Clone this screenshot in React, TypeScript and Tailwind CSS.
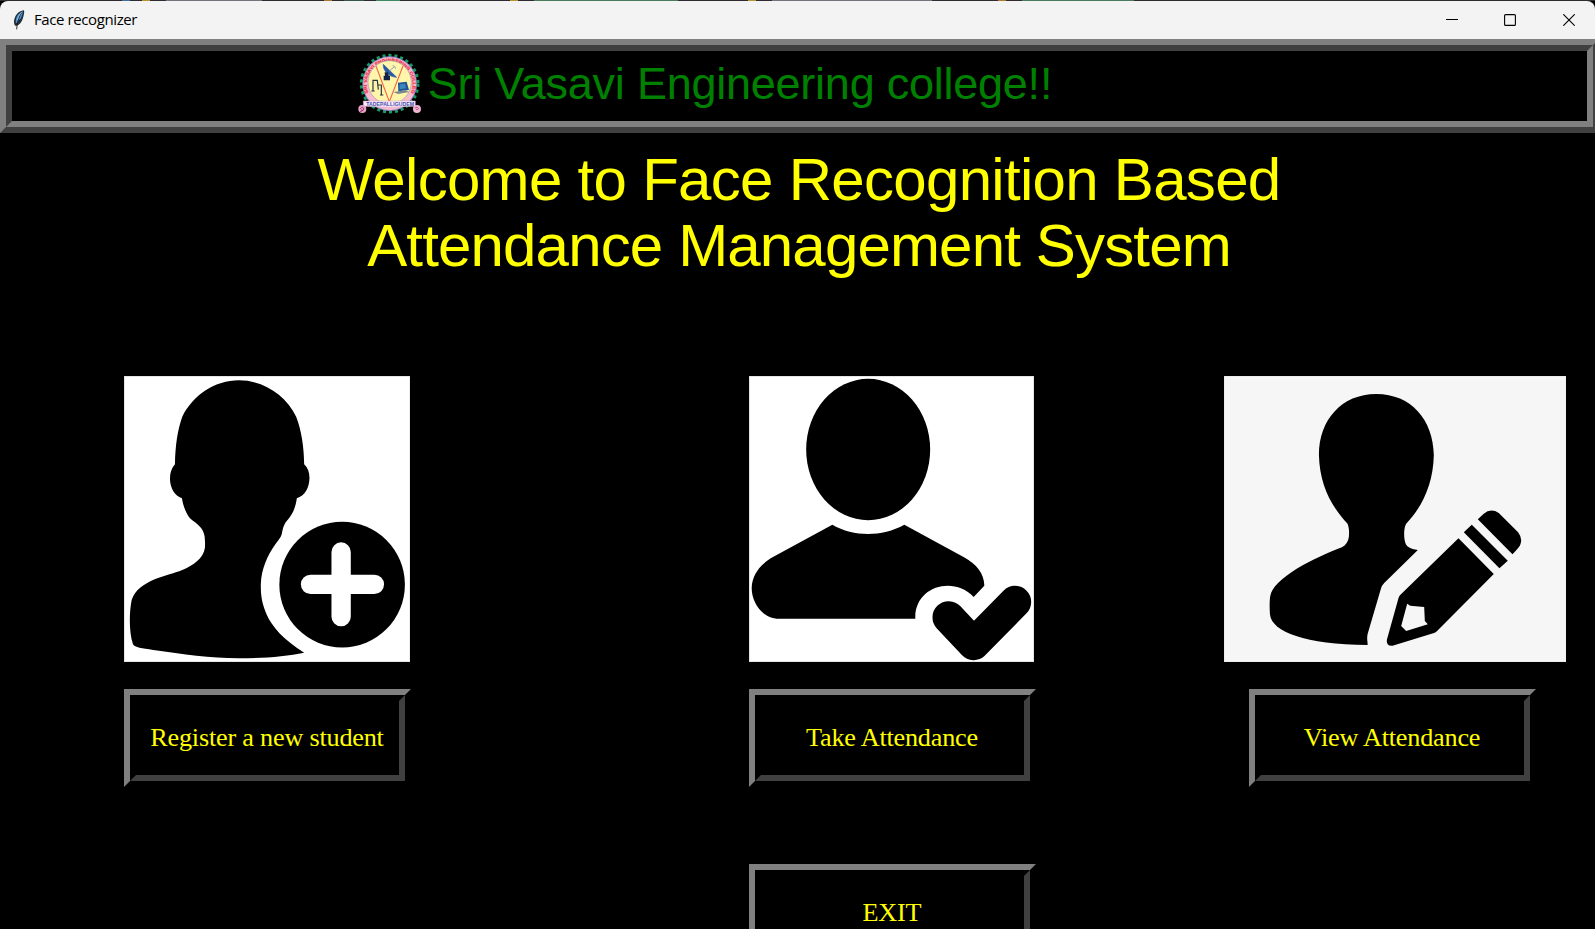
import React from "react";

function Feather() {
  return (
    <svg viewBox="0 0 36 60" className="h-5 w-3 shrink-0">
      <path d="M33 1C22 2 11 10 6 22c-4 9-4 16-1 24l4 2c10-3 18-12 21-24 2-8 5-15 3-23z" fill="#20303c" />
      <path d="M30 4C22 7 13 14 10 24c-2 7-2 12-1 16 8-4 13-10 16-19 2-6 5-11 5-17z" fill="#4f92d2" />
      <path d="M27 7C19 18 13 31 11 58" stroke="#111" strokeWidth="2.6" fill="none" />
      <path d="M26 7c-6 6-11 14-13 23" stroke="#a9cdea" strokeWidth="2.4" fill="none" />
      <path d="M21 28l-4 8" stroke="#111" strokeWidth="3" />
    </svg>
  );
}

function BackdropEdge() {
  return (
    <div className="flex h-px shrink-0 bg-[#2f2b30] pl-[122px]">
      <span className="w-2 bg-[#3f6f9a]" />
      <span className="ml-3 w-2 bg-[#b8962e]" />
      <span className="ml-4 w-24 bg-[#77727c]" />
      <span className="ml-[62px] w-2 bg-[#b07a35]" />
      <span className="ml-3 w-5 bg-[#35564e]" />
      <span className="ml-3 w-6 bg-[#3f8a62]" />
      <span className="ml-[110px] w-2 bg-[#b8962e]" />
      <span className="ml-4 w-36 bg-[#4a7a5c]" />
      <span className="ml-[70px] w-2 bg-[#b8962e]" />
      <span className="ml-4 w-40 bg-[#77727c]" />
      <span className="ml-[66px] w-2 bg-[#b07a35]" />
      <span className="ml-4 w-28 bg-[#4a7a5c]" />
    </div>
  );
}

function TitleBar() {
  return (
    <div className="flex h-[38px] shrink-0 items-center rounded-t-lg bg-[#f3f3f3] pl-[13px] pr-5">
      <Feather />
      <span className="ml-[9px] pb-0.5 font-['Open_Sans','Noto_Sans',sans-serif] text-[15px] leading-5 tracking-[-0.4px] text-black">
        Face recognizer
      </span>
      <div className="ml-auto flex items-center">
        <svg className="h-3 w-3" viewBox="0 0 12 12">
          <path d="M0 5.5H12" stroke="#000" />
        </svg>
        <svg className="ml-[46px] h-3 w-3" viewBox="0 0 12 12">
          <rect x="0.6" y="0.6" width="10.8" height="10.8" rx="1" fill="none" stroke="#000" strokeWidth="1.1" />
        </svg>
        <svg className="ml-[47px] h-3 w-3" viewBox="0 0 12 12">
          <path d="M0.3 0.3L11.7 11.7M11.7 0.3L0.3 11.7" stroke="#000" strokeWidth="1.1" />
        </svg>
      </div>
    </div>
  );
}

function CollegeLogo() {
  return (
    <svg viewBox="52 38 190 184" className="h-[61.3px] w-[63.3px] shrink-0 overflow-visible">
      <defs>
        <path id="arc" d="M83 158A69 69 0 1 1 211 158" />
      </defs>
      <circle cx="147" cy="130" r="85" fill="none" stroke="#149a62" strokeWidth="9" strokeDasharray="9.5 8.5" />
      <circle cx="147" cy="130" r="82" fill="#8d86c9" />
      <circle cx="147" cy="130" r="79" fill="#f9bccd" />
      <text
        fontFamily="Liberation Sans, sans-serif"
        fontSize="13"
        fontWeight="bold"
        fill="#ee3345"
        stroke="#ee3345"
        strokeWidth="0.6"
      >
        <textPath href="#arc" textLength="280" lengthAdjust="spacingAndGlyphs">
          SRI VASAVI ENGINEERING COLLEGE
        </textPath>
      </text>
      <circle cx="147" cy="126" r="65" fill="#fff6ab" stroke="#9aa0a8" strokeWidth="2" />
      <path d="M106 77L146 184L187 77" fill="none" stroke="#f26a4b" strokeWidth="3.5" />
      <path d="M128 72c-2 18 16 38 40 39z" fill="#2859a5" stroke="#2859a5" strokeWidth="2" />
      <path d="M146 92l14-12M156 76q8 0 9 9" stroke="#7d93b5" strokeWidth="2.5" fill="none" />
      <path d="M132 96h10l2 10h4v14h-19v-14h4z" fill="#142040" />
      <path d="M97 152v-32h13l3 28M122 164v-30h-10M92 152h10M118 164h10" fill="none" stroke="#2a3040" strokeWidth="3.5" />
      <path d="M172 127l26-3 7 25-32 4z" fill="#1f5796" />
      <path d="M177 132l16-2 3 14-19 3z" fill="#3b86be" />
      <path d="M158 155l36-5 12 5-34 6z" fill="#7a8791" />
      <path d="M68 182h156v16q-78 5-156 0z" fill="#f5edff" stroke="#d59dc0" strokeWidth="1.5" />
      <text
        x="77"
        y="196"
        textLength="143"
        lengthAdjust="spacingAndGlyphs"
        fontFamily="Liberation Sans, sans-serif"
        fontSize="14"
        fontWeight="bold"
        fill="#4c4ca8"
      >
        TADEPALLIGUDEM
      </text>
      <circle cx="65" cy="206" r="12" fill="#e9a3c9" />
      <path d="M58 206q8-10 12 0q-6 8-9 2M58 214l10-4" fill="none" stroke="#7c2b5c" strokeWidth="2.5" />
      <circle cx="229" cy="206" r="12" fill="#f3b5d3" />
      <path d="M223 203q8-6 11 2q-5 7-8 1" fill="none" stroke="#a54a7e" strokeWidth="2.5" />
    </svg>
  );
}

function Header() {
  return (
    <header className="h-[94px] w-[1599px] shrink-0 border-6 border-b-[#404040] border-l-[#808080] border-r-[#404040] border-t-[#808080]">
      <div className="flex h-full items-center border-6 border-b-[#808080] border-l-[#404040] border-r-[#808080] border-t-[#404040] pb-[5px] pl-[345.5px]">
        <CollegeLogo />
        <h2 className="ml-[7px] whitespace-nowrap text-[45px] leading-[52px] tracking-[-0.24px] text-[#008000]">
          Sri Vasavi Engineering college!!
        </h2>
      </div>
    </header>
  );
}

function RegisterPicture() {
  return (
    <svg viewBox="42 33 860 858" preserveAspectRatio="none" className="h-[286px] w-[286.4px] bg-white">
      <path d="M387 46C315 46 250 90 217 155C203 195 196 240 195 298C184 310 180 325 180 342C181 370 194 392 216 400C220 425 228 443 240 460C262 478 280 488 284 514C285 525 286 535 285 548C281 580 250 600 217 615C170 634 85 645 65 705C58 740 56 800 69 838C75 848 95 850 130 855C220 868 300 879 387 880C460 880 530 874 583 863C520 824 486 785 470 748C456 715 452 690 453 655C455 612 472 572 497 537C506 524 513 518 516 506C520 485 524 477 530 469C547 450 557 430 561 400C585 392 598 370 599 340C599 322 594 308 583 298C583 250 575 195 559 155C528 90 460 46 387 46z" />
      <circle cx="697" cy="659" r="188.5" />
      <path d="M694 561V755M602 658H794" stroke="#fff" strokeWidth="58" strokeLinecap="round" />
      <rect x="43.5" y="34.5" width="857" height="855" fill="none" stroke="#e4e4e4" strokeWidth="3" />
    </svg>
  );
}

function TakePicture() {
  return (
    <svg viewBox="27 33 855 858" preserveAspectRatio="none" className="h-[286px] w-[285px] bg-white">
      <ellipse cx="384.5" cy="253.5" rx="186" ry="212" />
      <path d="M277 479C342 516 425 516 493 479L672 577C710 598 732 625 733 662L701 696C640 630 522 665 526 761H120C70 763 35 716 35 668C37 630 60 600 92 580z" />
      <path d="M626 757L701 837L825 711" fill="none" stroke="#000" strokeWidth="97" strokeLinecap="round" strokeLinejoin="round" />
      <rect x="28.5" y="34.5" width="852" height="855" fill="none" stroke="#e4e4e4" strokeWidth="3" />
    </svg>
  );
}

function ViewPicture() {
  return (
    <svg viewBox="27 33 1028 858" preserveAspectRatio="none" className="h-[286px] w-[342.4px] bg-[#f6f6f6]">
      <path d="M484 87C380 87 312 165 312 270C314 355 345 420 398 476C403 490 403 500 402 515C400 530 393 540 381 547C300 578 170 640 165 698Q163 720 165 748C170 800 270 838 458 840C459 830 455 825 458 808L497 675Q499 662 508 654L609 555C585 552 577 545 573 538C566 520 566 490 574 476C620 428 655 360 657 270C655 165 590 87 484 87z" />
      <path d="M731 520L837 627L666 799Q662 804 655 805L533 842Q513 843 516 824L551 699Q552 694 556 690z" />
      <path d="M771 479L879 587L854 610L747 502z" />
      <path d="M789 463L806 447Q828 428 852 444L910 502Q924 520 917 538Q915 546 893 568z" />
      <path d="M577 716L586 722L628 726L630 768L639 778L574 798L559 783z" fill="#f6f6f6" />
      <rect x="28" y="34" width="1026" height="856" fill="none" stroke="#e8e8e8" strokeWidth="2" />
    </svg>
  );
}

function RidgeButton({ label }: { label: string }) {
  return (
    <button className="block h-[98px] w-[287px] border-6 border-b-black border-l-[#808080] border-r-black border-t-[#808080] bg-black">
      <span className="flex h-full items-center justify-center whitespace-nowrap border-6 border-b-[#404040] border-l-black border-r-[#404040] border-t-black pr-px font-['Liberation_Serif','Times_New_Roman',serif] text-[26.2px] leading-[30px] tracking-[-0.2px] text-[#ffff00]">
        {label}
      </span>
    </button>
  );
}

export default function App() {
  return (
    <div className="flex h-[929px] w-[1595px] flex-col overflow-hidden bg-black font-['Liberation_Sans',Arial,sans-serif]">
      <BackdropEdge />
      <TitleBar />
      <Header />
      <h1 className="mt-[14px] pl-[3px] text-center text-[60px] leading-[66px] text-[#ffff00]">
        <span className="tracking-[-0.7px]">Welcome to Face Recognition Based</span>
        <br />
        <span className="tracking-[-0.84px]">Attendance Management System</span>
      </h1>
      <main className="mt-[97px] grid shrink-0 grid-cols-[625px_475px_1fr] pl-[124px]">
        <section className="flex flex-col gap-[27px]">
          <RegisterPicture />
          <RidgeButton label="Register a new student" />
        </section>
        <section className="flex flex-col gap-[27px]">
          <TakePicture />
          <RidgeButton label="Take Attendance" />
          <div className="mt-[50px]">
            <RidgeButton label="EXIT" />
          </div>
        </section>
        <section className="flex flex-col gap-[27px]">
          <ViewPicture />
          <div className="pl-[25px]">
            <RidgeButton label="View Attendance" />
          </div>
        </section>
      </main>
    </div>
  );
}
